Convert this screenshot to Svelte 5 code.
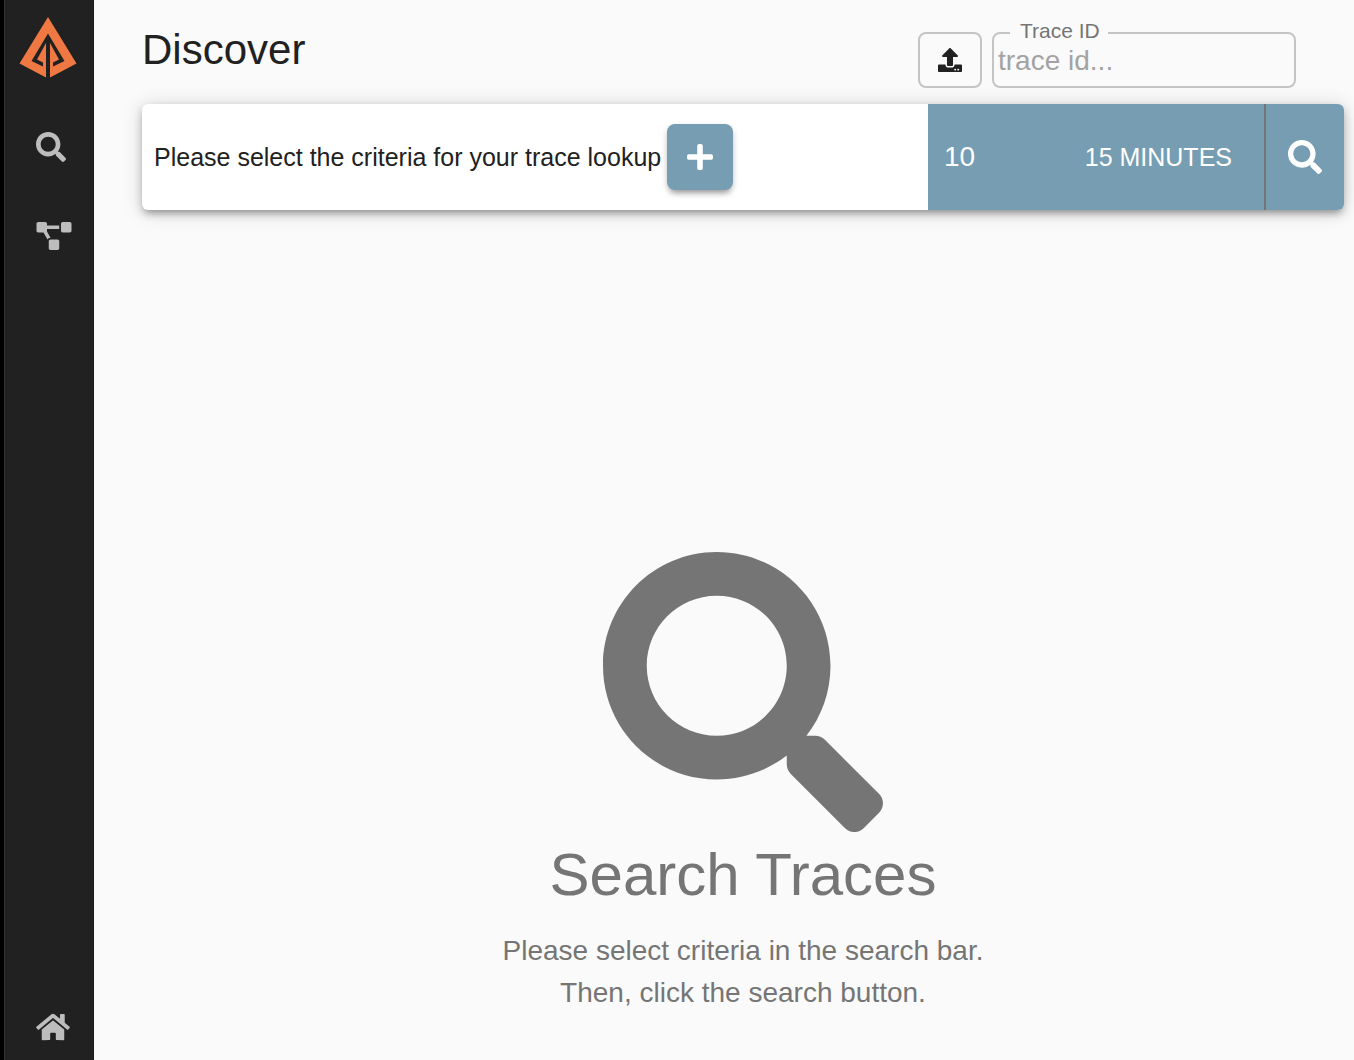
<script>
  let traceId = $state('');
  let limit = $state('10');

  const searchPath =
    'M505 442.7L405.3 343c-4.5-4.5-10.6-7-17-7H372c27.6-35.3 44-79.7 44-128C416 93.1 322.9 0 208 0S0 93.1 0 208s93.1 208 208 208c48.3 0 92.7-16.4 128-44v16.3c0 6.4 2.5 12.5 7 17l99.7 99.7c9.4 9.4 24.6 9.4 33.9 0l28.3-28.3c9.4-9.4 9.4-24.6.1-34zM208 336c-70.7 0-128-57.2-128-128 0-70.7 57.2-128 128-128 70.7 0 128 57.2 128 128 0 70.7-57.2 128-128 128z';
</script>

{#snippet searchIcon(cls)}
  <svg class={cls} viewBox="0 0 512 512" aria-hidden="true"><path d={searchPath} /></svg>
{/snippet}

<div class="app">
  <nav class="sidebar" aria-label="Main">
    <a class="logo" href="#/" aria-label="Start page">
      <svg viewBox="0 0 58 62" aria-hidden="true">
        <path d="M29 1L0.5 47.5L27 61.5V27L18 43.5L24 46.5V50.5L12.5 45L29 17.5L45.5 45L34 50.5V46.5L40 43.5L31 27V61.5L57.5 47.5Z" />
      </svg>
    </a>
    <a class="link" href="#/search" aria-label="Discover">
      {@render searchIcon('nav-search')}
    </a>
    <a class="link" href="#/dependency" aria-label="Dependencies">
      <svg class="nav-graph" viewBox="0 0 640 512" aria-hidden="true"><path d="M384 320H256c-17.67 0-32 14.33-32 32v128c0 17.67 14.33 32 32 32h128c17.67 0 32-14.33 32-32V352c0-17.67-14.33-32-32-32zM192 32c0-17.67-14.33-32-32-32H32C14.33 0 0 14.33 0 32v128c0 17.67 14.33 32 32 32h95.72l73.16 128.04C211.98 300.98 232.4 288 256 288h.28L192 175.51V128h224V64H192V32zM608 0H480c-17.67 0-32 14.33-32 32v128c0 17.67 14.33 32 32 32h128c17.67 0 32-14.33 32-32V32c0-17.67-14.33-32-32-32z" /></svg>
    </a>
    <a class="link home" href="#/home" aria-label="Home">
      <svg class="nav-home" viewBox="0 0 576 512" aria-hidden="true"><path d="M280.37 148.26L96 300.11V464a16 16 0 0 0 16 16l112.06-.29a16 16 0 0 0 15.92-16V368a16 16 0 0 1 16-16h64a16 16 0 0 1 16 16v95.64a16 16 0 0 0 16 16.05L464 480a16 16 0 0 0 16-16V300L295.67 148.26a12.19 12.19 0 0 0-15.3 0zM571.6 251.47L488 182.56V44.05a12 12 0 0 0-12-12h-56a12 12 0 0 0-12 12v72.61L318.47 43a48 48 0 0 0-61 0L4.34 251.47a12 12 0 0 0-1.6 16.9l25.5 31A12 12 0 0 0 45.15 301l235.22-193.74a12.19 12.19 0 0 1 15.3 0L530.9 301a12 12 0 0 0 16.9-1.6l25.5-31a12 12 0 0 0-1.7-16.93z" /></svg>
    </a>
  </nav>

  <main>
    <header>
      <h1>Discover</h1>
      <button class="upload" type="button" aria-label="Upload JSON">
        <svg viewBox="0 0 512 512" aria-hidden="true"><path d="M296 384h-80c-13.3 0-24-10.7-24-24V192h-87.7c-17.8 0-26.7-21.5-14.1-34.1L242.3 5.7c7.5-7.5 19.8-7.5 27.3 0l152.2 152.2c12.6 12.6 3.7 34.1-14.1 34.1H320v168c0 13.3-10.7 24-24 24zm216-8v112c0 13.3-10.7 24-24 24H24c-13.3 0-24-10.7-24-24V376c0-13.3 10.7-24 24-24h136v8c0 30.9 25.1 56 56 56h80c30.9 0 56-25.1 56-56v-8h136c13.3 0 24 10.7 24 24zm-124 88c0-11-9-20-20-20s-20 9-20 20 9 20 20 20 20-9 20-20zm64 0c0-11-9-20-20-20s-20 9-20 20 9 20 20 20 20-9 20-20z" /></svg>
      </button>
      <fieldset>
        <legend><label for="trace-id">Trace ID</label></legend>
        <input id="trace-id" type="text" placeholder="trace id..." bind:value={traceId} />
      </fieldset>
    </header>

    <form class="bar" onsubmit={(e) => e.preventDefault()}>
      <div class="criteria">
        <span>Please select the criteria for your trace lookup</span>
        <button class="add" type="button" aria-label="Add criterion">
          <svg viewBox="0 0 448 512" aria-hidden="true"><path d="M416 208H272V64c0-17.67-14.33-32-32-32h-32c-17.67 0-32 14.33-32 32v144H32c-17.67 0-32 14.33-32 32v32c0 17.67 14.33 32 32 32h144v144c0 17.67 14.33 32 32 32h32c17.67 0 32-14.33 32-32V304h144c17.67 0 32-14.33 32-32v-32c0-17.67-14.33-32-32-32z" /></svg>
        </button>
      </div>
      <div class="options">
        <input class="limit" type="text" aria-label="Limit" bind:value={limit} />
        <button class="lookback" type="button">15 MINUTES</button>
      </div>
      <button class="run" type="submit" aria-label="Search">
        {@render searchIcon('run-icon')}
      </button>
    </form>

    <section class="empty">
      {@render searchIcon('empty-icon')}
      <h2>Search Traces</h2>
      <p>Please select criteria in the search bar.<br />Then, click the search button.</p>
    </section>
  </main>
</div>

<style>
  :global(body) {
    margin: 0;
    background: #fafafa;
  }

  .app {
    display: flex;
    min-height: 100vh;
    box-sizing: border-box;
    font-family: 'Liberation Sans', Arial, sans-serif;
    color: #212121;
  }

  svg {
    display: block;
    fill: currentColor;
  }

  button,
  input {
    font-family: inherit;
    margin: 0;
    border: 0;
    padding: 0;
    background: none;
    color: inherit;
  }

  button {
    display: flex;
    align-items: center;
    justify-content: center;
    cursor: pointer;
  }

  .sidebar {
    flex: 0 0 94px;
    display: flex;
    flex-direction: column;
    box-sizing: border-box;
    border-left: 4px solid #000;
    padding: 16px 0 18px;
    background: #212121;
    box-shadow: inset 1px 0 #333, inset -1px 0 #1a1a1a;
  }

  .logo {
    padding-left: 15px;
    margin-bottom: 54px;
    color: #ef7843;
  }

  .logo svg {
    width: 58px;
    height: 62px;
  }

  .link {
    padding-left: 32px;
    margin-bottom: 60px;
    color: #bdbdbd;
  }

  .home {
    margin-top: auto;
    margin-bottom: 0;
  }

  .nav-search {
    width: 30px;
    height: 30px;
  }

  .nav-graph {
    width: 36px;
    height: 28px;
  }

  .nav-home {
    width: 34px;
    height: 30px;
  }

  main {
    flex: 1;
    min-width: 0;
    padding: 19px 10px 46px 48px;
  }

  header {
    display: flex;
    align-items: flex-end;
    gap: 10px;
    padding-right: 48px;
    margin-bottom: 16px;
  }

  h1 {
    flex: 1;
    align-self: flex-start;
    margin: 7px 0 0;
    font-size: 42px;
    line-height: 48px;
    font-weight: 400;
  }

  .upload {
    box-sizing: border-box;
    width: 64px;
    height: 56px;
    border: 2px solid #c4c4c4;
    border-radius: 8px;
  }

  .upload svg {
    width: 24px;
    height: 24px;
  }

  fieldset {
    box-sizing: border-box;
    width: 304px;
    min-width: 0;
    margin: 0;
    border: 2px solid #c4c4c4;
    border-radius: 8px;
    padding: 0 4px 11px;
  }

  legend {
    margin-left: 12px;
    padding: 0 8px 4px 10px;
    font-size: 21px;
    line-height: 24px;
    color: #757575;
  }

  legend label {
    display: block;
  }

  #trace-id {
    display: block;
    width: 100%;
    height: 28px;
    font-size: 28px;
    line-height: 28px;
    outline: none;
  }

  #trace-id::placeholder {
    color: #a3a3a3;
    opacity: 1;
  }

  .bar {
    display: flex;
    min-height: 106px;
    border-radius: 6px;
    background: #fff;
    box-shadow: 0 6px 6px -4px rgba(0, 0, 0, 0.2), 0 4px 8px rgba(0, 0, 0, 0.2), 0 2px 20px rgba(0, 0, 0, 0.16);
  }

  .criteria {
    flex: 1;
    display: flex;
    align-items: center;
    gap: 6px;
    padding-left: 12px;
    font-size: 25px;
    line-height: 32px;
  }

  .add {
    width: 66px;
    height: 66px;
    border-radius: 8px;
    background: #769db2;
    color: #fff;
    box-shadow: 0 6px 6px -4px rgba(0, 0, 0, 0.3), 0 3px 6px rgba(0, 0, 0, 0.2);
  }

  .add svg {
    width: 26px;
    height: 30px;
  }

  .options {
    display: flex;
    align-items: center;
    justify-content: space-between;
    box-sizing: border-box;
    width: 336px;
    padding: 0 32px 0 16px;
    background: #769db2;
    color: #fff;
  }

  .limit {
    width: 96px;
    height: 40px;
    font-size: 28px;
    outline: none;
  }

  .lookback {
    font-size: 25px;
    line-height: 32px;
  }

  .run {
    box-sizing: border-box;
    width: 80px;
    border-left: 2px solid #757575;
    border-radius: 0 6px 6px 0;
    background: #769db2;
    color: #fff;
  }

  .run-icon {
    width: 34px;
    height: 34px;
  }

  .empty {
    display: flex;
    flex-direction: column;
    align-items: center;
    padding-top: 342px;
    color: #757575;
    text-align: center;
  }

  .empty-icon {
    width: 280px;
    height: 280px;
  }

  h2 {
    margin: 10px 0 22px;
    font-size: 60px;
    line-height: 66px;
    font-weight: 400;
  }

  p {
    margin: 0;
    font-size: 28px;
    line-height: 42px;
  }
</style>
